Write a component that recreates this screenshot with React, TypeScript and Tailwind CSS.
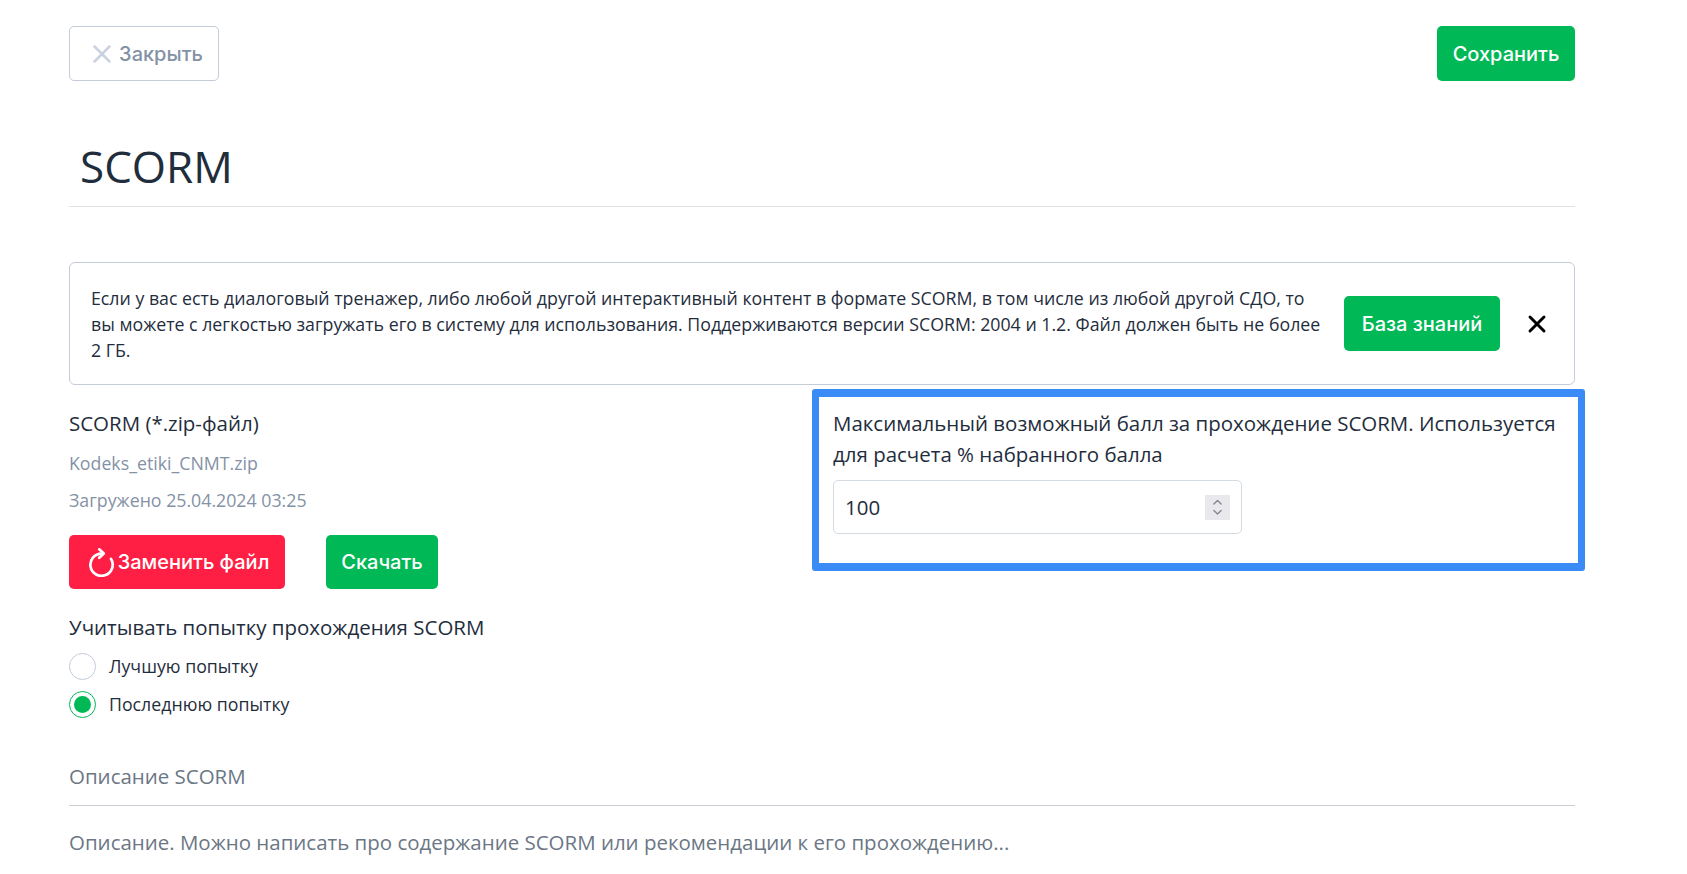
import { ChevronDown, ChevronUp, X } from 'lucide-react';

const btn = "flex items-center justify-center rounded-[5px] font-['Inter',sans-serif] text-[20px] font-medium text-white";

function ReplaceIcon() {
  return (
    <svg viewBox="0 0 26 26" width="29" height="29" fill="none" stroke="currentColor" strokeWidth="2.4" strokeLinecap="round" strokeLinejoin="round">
      <path d="M13 5 A10 10 0 1 0 21.5 9.7" />
      <path d="M11 1.2 L15 5 L11 8.8" />
    </svg>
  );
}

export default function App() {
  return (
    <div className="h-[874px] overflow-hidden bg-white pl-[69px] pr-[112px] pt-[26px] font-['Open_Sans',sans-serif] text-[#1f2d3d]">
      {/* Шапка */}
      <div className="flex items-center justify-between">
        <button className="flex h-[55px] w-[150px] items-center justify-center gap-[2px] rounded-[5px] border border-[#c3ccd9] pl-[2px] font-['Inter',sans-serif] text-[20px] font-medium text-[#8492a6]">
          <X size={30} strokeWidth={2} className="text-[#c9d2de]" /> Закрыть
        </button>
        <button className={`${btn} h-[55px] w-[138px] bg-[#00b856]`}>Сохранить</button>
      </div>

      <h1 className="mt-[50px] border-b border-[#dfe3e8] pb-[4px] pl-[11px] text-[44px] leading-[71px]">SCORM</h1>

      {/* Подсказка */}
      <div className="mt-[55px] flex h-[123px] items-center rounded-[6px] border border-[#c3ccd9] pl-[21px]">
        <p className="w-[1232px] text-[17.76px] leading-[26px]">
          Если у вас есть диалоговый тренажер, либо любой другой интерактивный контент в формате SCORM, в том числе из любой другой СДО, то вы можете с легкостью загружать его в систему для использования. Поддерживаются версии SCORM: 2004 и 1.2. Файл должен быть не более 2 ГБ.
        </p>
        <button className={`${btn} ml-[21px] h-[55px] w-[156px] shrink-0 bg-[#00b856]`}>База знаний</button>
        <X size={28} strokeWidth={2.5} className="ml-[23px] shrink-0 text-black" />
      </div>

      <div className="flex">
        <div className="w-[743px] shrink-0 pt-[23px]">
          <div className="text-[20.48px] leading-[31px]">SCORM (*.zip-файл)</div>
          <div className="mt-[10px] text-[17.76px] leading-[28px] text-[#8492a6]">Kodeks_etiki_CNMT.zip</div>
          <div className="mt-[9px] text-[17.76px] leading-[28px] text-[#8492a6]">Загружено 25.04.2024 03:25</div>
          <div className="mt-[21px] flex gap-[41px]">
            <button className={`${btn} h-[54px] w-[216px] gap-[2px] bg-[#ff1f44] pl-[2px]`}>
              <ReplaceIcon /> Заменить файл
            </button>
            <button className={`${btn} h-[54px] w-[112px] bg-[#00b856]`}>Скачать</button>
          </div>
          <div className="mt-[23px] text-[20.48px] leading-[31px]">Учитывать попытку прохождения SCORM</div>
          <label className="mt-[10px] flex h-[27px] items-center gap-[13px] text-[17.76px]">
            <span className="h-[27px] w-[27px] rounded-full border border-[#c3ccd9]" />
            Лучшую попытку
          </label>
          <label className="mt-[11px] flex h-[27px] items-center gap-[13px] text-[17.76px]">
            <span className="flex h-[27px] w-[27px] items-center justify-center rounded-full border-[1.5px] border-[#00b856]">
              <span className="h-[17px] w-[17px] rounded-full bg-[#00b856]" />
            </span>
            Последнюю попытку
          </label>
        </div>

        {/* Балл */}
        <div className="mt-[4px] mr-[-10px] h-[182px] w-[773px] shrink-0 rounded-[3px] border-x-[7px] border-y-[8px] border-[#3b8bf6] pl-[14px] pt-[11px]">
          <div className="text-[20.48px] leading-[31px]">
            Максимальный возможный балл за прохождение SCORM. Используется для расчета % набранного балла
          </div>
          <div className="mt-[10px] flex h-[54px] w-[409px] items-center justify-between rounded-[5px] border border-[#d5dbe3] pl-[11px] pr-[11px] text-[20.48px]">
            100
            <span className="flex h-[25px] w-[25px] flex-col items-center justify-center bg-[#e9e9ed] text-[#8a8a96]">
              <ChevronUp size={17} strokeWidth={2.5} className="-mb-[4px]" />
              <ChevronDown size={17} strokeWidth={2.5} />
            </span>
          </div>
        </div>
      </div>

      <div className="mt-[43px] border-b border-[#c9ced6] pb-[13px] text-[20.48px] leading-[31px] text-[#6b7785]">Описание SCORM</div>
      <div className="mt-[21px] text-[20.48px] leading-[31px] text-[#6b7785]">
        Описание. Можно написать про содержание SCORM или рекомендации к его прохождению...
      </div>
    </div>
  );
}
